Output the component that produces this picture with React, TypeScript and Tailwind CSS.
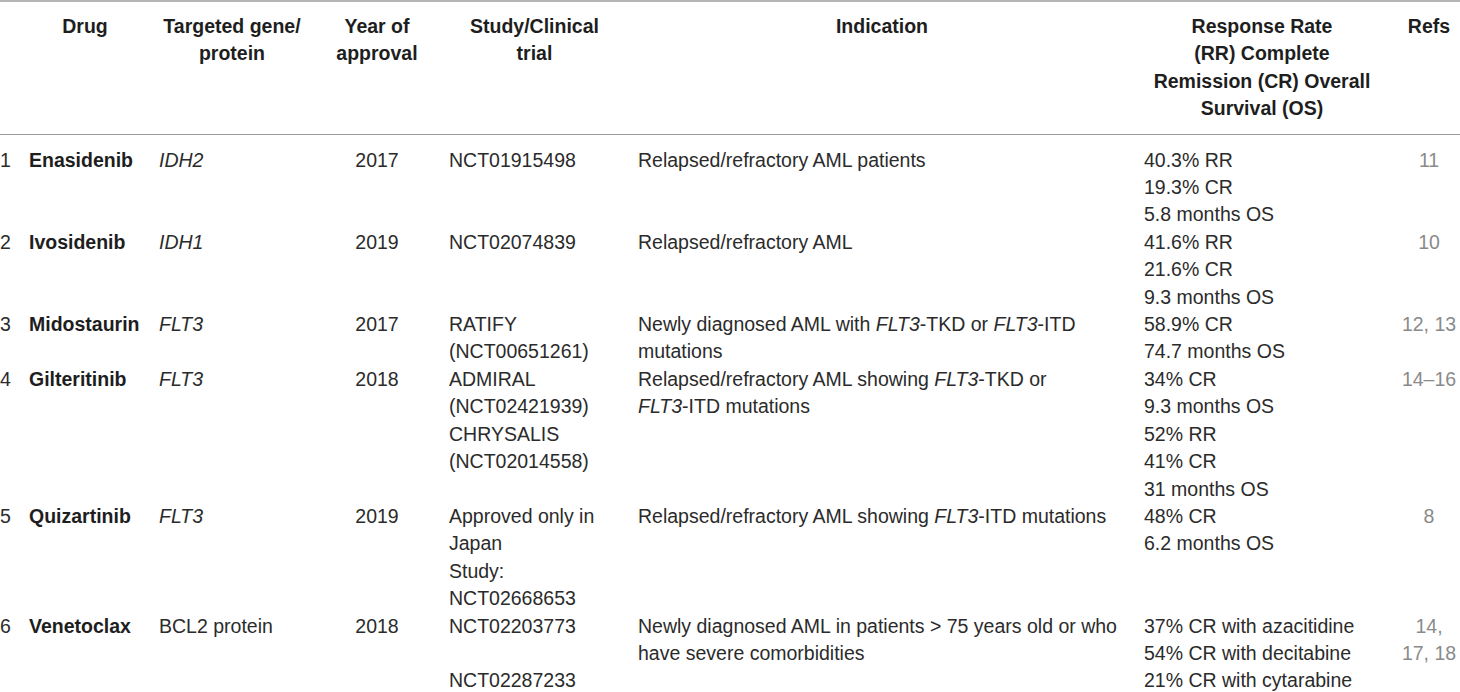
import React from 'react';

type Row = {
  n: number;
  drug: string;
  target: React.ReactNode;
  year: string;
  study: React.ReactNode;
  indication: React.ReactNode;
  response: string[];
  refs: React.ReactNode;
};

const I = ({ children }: { children: React.ReactNode }) => <i>{children}</i>;

const rows: Row[] = [
  {
    n: 1,
    drug: 'Enasidenib',
    target: <I>IDH2</I>,
    year: '2017',
    study: 'NCT01915498',
    indication: 'Relapsed/refractory AML patients',
    response: ['40.3% RR', '19.3% CR', '5.8 months OS'],
    refs: '11',
  },
  {
    n: 2,
    drug: 'Ivosidenib',
    target: <I>IDH1</I>,
    year: '2019',
    study: 'NCT02074839',
    indication: 'Relapsed/refractory AML',
    response: ['41.6% RR', '21.6% CR', '9.3 months OS'],
    refs: '10',
  },
  {
    n: 3,
    drug: 'Midostaurin',
    target: <I>FLT3</I>,
    year: '2017',
    study: (
      <>
        RATIFY
        <br />
        (NCT00651261)
      </>
    ),
    indication: (
      <>
        Newly diagnosed AML with <I>FLT3</I>-TKD or <I>FLT3</I>-ITD
        <br />
        mutations
      </>
    ),
    response: ['58.9% CR', '74.7 months OS'],
    refs: '12, 13',
  },
  {
    n: 4,
    drug: 'Gilteritinib',
    target: <I>FLT3</I>,
    year: '2018',
    study: (
      <>
        ADMIRAL
        <br />
        (NCT02421939)
        <br />
        CHRYSALIS
        <br />
        (NCT02014558)
      </>
    ),
    indication: (
      <>
        Relapsed/refractory AML showing <I>FLT3</I>-TKD or
        <br />
        <I>FLT3</I>-ITD mutations
      </>
    ),
    response: ['34% CR', '9.3 months OS', '52% RR', '41% CR', '31 months OS'],
    refs: '14–16',
  },
  {
    n: 5,
    drug: 'Quizartinib',
    target: <I>FLT3</I>,
    year: '2019',
    study: (
      <>
        Approved only in
        <br />
        Japan
        <br />
        Study:
        <br />
        NCT02668653
      </>
    ),
    indication: (
      <>
        Relapsed/refractory AML showing <I>FLT3</I>-ITD mutations
      </>
    ),
    response: ['48% CR', '6.2 months OS'],
    refs: '8',
  },
  {
    n: 6,
    drug: 'Venetoclax',
    target: 'BCL2 protein',
    year: '2018',
    study: (
      <>
        NCT02203773
        <br />
        <br />
        NCT02287233
      </>
    ),
    indication: (
      <>
        Newly diagnosed AML in patients &gt; 75 years old or who
        <br />
        have severe comorbidities
      </>
    ),
    response: ['37% CR with azacitidine', '54% CR with decitabine', '21% CR with cytarabine'],
    refs: (
      <>
        14,
        <br />
        17, 18
      </>
    ),
  },
];

export default function App() {
  return (
    <div className="w-[1460px] bg-white font-['Liberation_Sans',Arial,sans-serif] text-[19.5px] leading-[27.4px] text-[#2b2b2b]">
      <table className="w-full table-fixed border-t-2 border-[#b5b5b5]">
        <colgroup>
          <col className="w-[29px]" />
          <col className="w-[130px]" />
          <col className="w-[164px]" />
          <col className="w-[126px]" />
          <col className="w-[189px]" />
          <col className="w-[506px]" />
          <col className="w-[254px]" />
          <col className="w-[62px]" />
        </colgroup>
        <thead>
          <tr className="border-b border-[#9a9a9a] align-top font-bold text-[#1e1e1e]">
            <th className="pt-[11px] pb-[11px] pr-[18px]"></th>
            <th className="pt-[11px] pb-[11px] pr-[18px] text-center">Drug</th>
            <th className="pt-[11px] pb-[11px] pr-[18px] text-center">
              Targeted gene/
              <br />
              protein
            </th>
            <th className="pt-[11px] pb-[11px] pr-[18px] text-center">
              Year of
              <br />
              approval
            </th>
            <th className="pt-[11px] pb-[11px] pr-[18px] text-center">
              Study/Clinical
              <br />
              trial
            </th>
            <th className="pt-[11px] pb-[11px] pr-[18px] text-center">Indication</th>
            <th className="pt-[11px] pb-[11px] pr-[18px] text-center">
              Response Rate
              <br />
              (RR) Complete
              <br />
              Remission (CR) Overall
              <br />
              Survival (OS)
            </th>
            <th className="pt-[11px] pb-[11px] text-center">Refs</th>
          </tr>
        </thead>
        <tbody>
          {rows.map((r, idx) => (
            <tr key={r.n} className={idx === 0 ? 'align-top [&>td]:pt-[12px]' : 'align-top'}>
              <td className="pr-[18px]">{r.n}</td>
              <td className="pr-[18px] font-bold text-[#1e1e1e]">{r.drug}</td>
              <td className="pr-[18px]">{r.target}</td>
              <td className="pr-[18px] text-center">{r.year}</td>
              <td className="pr-[18px]">{r.study}</td>
              <td className="pr-[18px]">{r.indication}</td>
              <td className="pr-[18px]">
                {r.response.map((line) => (
                  <div key={line}>{line}</div>
                ))}
              </td>
              <td className="text-center text-[#8a8a8a]">{r.refs}</td>
            </tr>
          ))}
        </tbody>
      </table>
    </div>
  );
}
